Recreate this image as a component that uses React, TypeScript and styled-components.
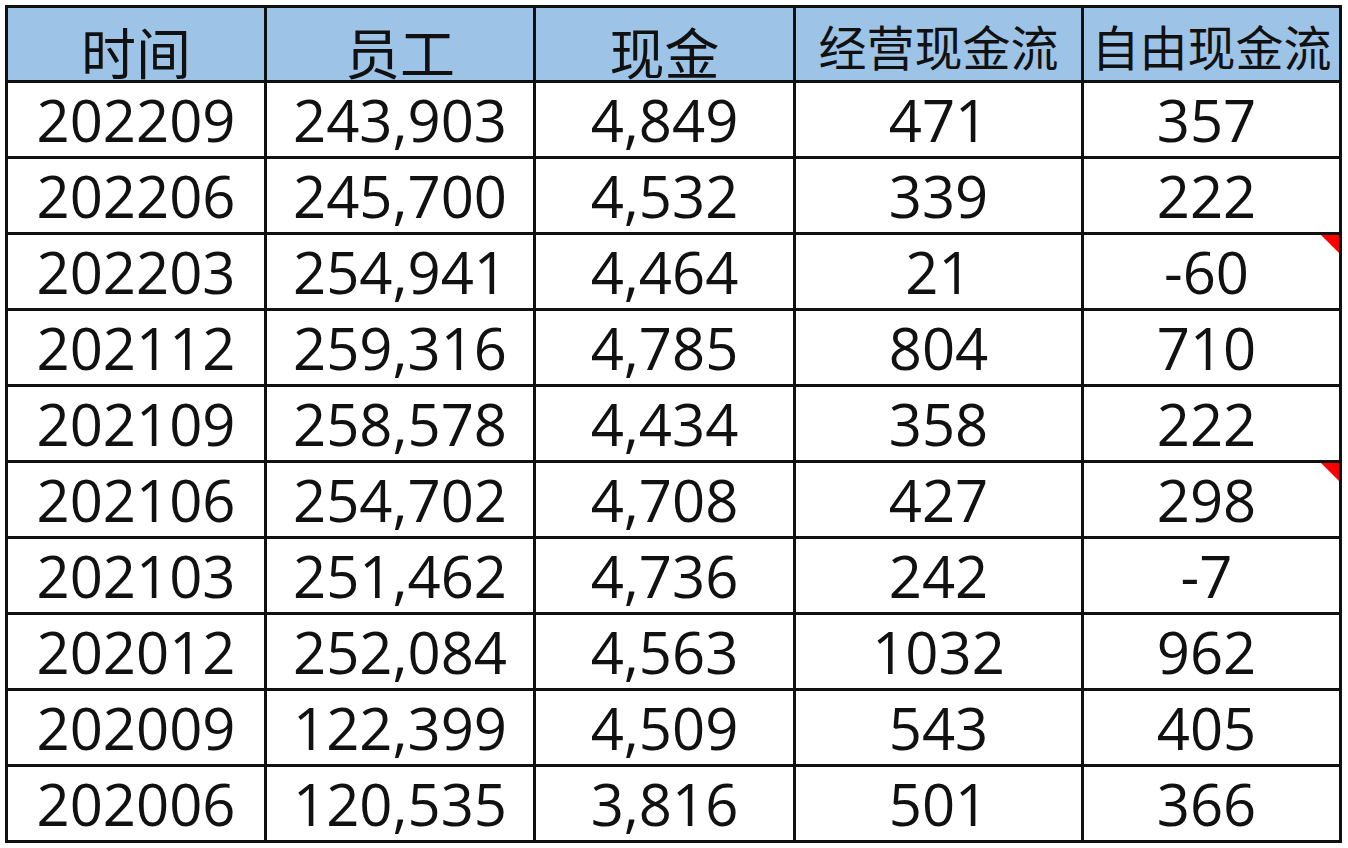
import React from 'react'
import styled, { createGlobalStyle } from 'styled-components'

const GlobalStyle = createGlobalStyle`
  html, body {
    margin: 0;
    padding: 0;
    background: #ffffff;
  }
`

const Page = styled.div`
  padding: 5px 0 0 5px;
`

const Sheet = styled.div`
  display: grid;
  grid-template-columns: 256px 266px 257px 285px 255px;
  grid-template-rows: 72px repeat(10, 73px);
  gap: 3px;
  padding: 3px;
  width: max-content;
  background: #111111;
`

const HeadCell = styled.div<{ $small?: boolean }>`
  display: flex;
  align-items: center;
  justify-content: center;
  background: #9dc3e6;
  color: #111111;
  font-family: "Noto Sans CJK SC", "Noto Sans", sans-serif;
  font-size: ${(p) => (p.$small ? '48px' : '55px')};
  line-height: 1;
  padding-top: ${(p) => (p.$small ? '2px' : '12px')};
  white-space: nowrap;
`

const Cell = styled.div<{ $flag?: boolean; $last?: boolean }>`
  position: relative;
  display: flex;
  align-items: center;
  justify-content: center;
  background: #ffffff;
  color: #111111;
  font-family: "Open Sans", "Noto Sans", sans-serif;
  font-size: 58px;
  line-height: 1;
  padding-right: ${(p) => (p.$last ? '10px' : '0')};

  &::after {
    content: '';
    display: ${(p) => (p.$flag ? 'block' : 'none')};
    position: absolute;
    top: 0;
    right: 0;
    border-top: 18px solid #ff0000;
    border-left: 18px solid transparent;
  }
`

const headers = ['时间', '员工', '现金', '经营现金流', '自由现金流']

const rows: [string, string, string, string, string, boolean][] = [
  ['202209', '243,903', '4,849', '471', '357', false],
  ['202206', '245,700', '4,532', '339', '222', false],
  ['202203', '254,941', '4,464', '21', '-60', true],
  ['202112', '259,316', '4,785', '804', '710', false],
  ['202109', '258,578', '4,434', '358', '222', false],
  ['202106', '254,702', '4,708', '427', '298', true],
  ['202103', '251,462', '4,736', '242', '-7', false],
  ['202012', '252,084', '4,563', '1032', '962', false],
  ['202009', '122,399', '4,509', '543', '405', false],
  ['202006', '120,535', '3,816', '501', '366', false],
]

const App: React.FC = () => (
  <Page>
    <GlobalStyle />
    <Sheet>
      {headers.map((h) => (
        <HeadCell key={h} $small={h.length > 2}>{h}</HeadCell>
      ))}
      {rows.map(([date, staff, cash, op, free, flag]) => (
        <React.Fragment key={date}>
          <Cell>{date}</Cell>
          <Cell>{staff}</Cell>
          <Cell>{cash}</Cell>
          <Cell>{op}</Cell>
          <Cell $last $flag={flag}>{free}</Cell>
        </React.Fragment>
      ))}
    </Sheet>
  </Page>
)

export default App
